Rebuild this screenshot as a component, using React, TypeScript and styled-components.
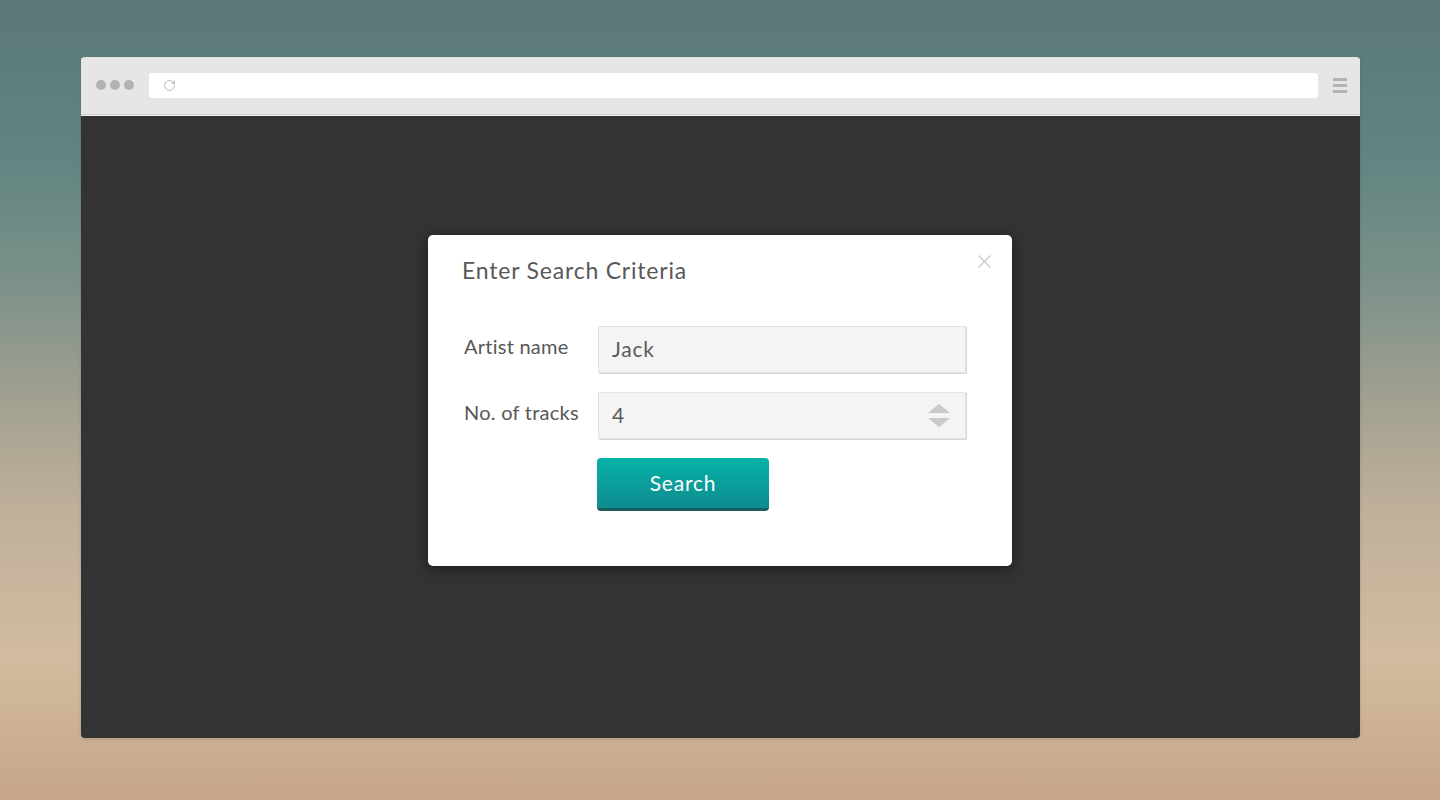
import React from "react";
import styled, { createGlobalStyle } from "styled-components";
import { RotateCw } from "lucide-react";

const GlobalStyle = createGlobalStyle`
  html, body { margin: 0; padding: 0; }
  body {
    font-family: Lato, "Open Sans", sans-serif;
    background: linear-gradient(to bottom, #5a7877 0%, #628581 20%, #7b918a 35%, #a2a090 50%, #bfb09a 64%, #d2bba0 82%, #c6a68a 100%);
    min-height: 800px;
  }
`;

const Page = styled.div`
  width: 1440px;
  height: 800px;
  box-sizing: border-box;
  padding: 57px 80px 62px 81px;
  display: flex;
`;

const Window = styled.div`
  flex: 1;
  display: flex;
  flex-direction: column;
  border-radius: 4px;
  overflow: hidden;
  box-shadow: 0 1px 3px rgba(0, 0, 0, 0.15);
`;

const Toolbar = styled.div`
  height: 56px;
  background: #e6e6e6;
  border-bottom: 1px solid #cfcfcf;
  box-shadow: 0 1px 0 #eeeeee;
  display: flex;
  align-items: center;
  padding: 0 13px 1px 15px;
  gap: 15px;
  position: relative;
  z-index: 1;
`;

const Dots = styled.div`
  display: flex;
  gap: 4px;
`;

const Dot = styled.span`
  width: 10px;
  height: 10px;
  border-radius: 50%;
  background: #b3b3b3;
`;

const UrlBar = styled.div`
  flex: 1;
  height: 25px;
  background: #ffffff;
  border-radius: 3px;
  display: flex;
  align-items: center;
  padding-left: 14px;
  color: #aaaaaa;
`;

const Burger = styled.div`
  width: 14px;
  display: flex;
  flex-direction: column;
  gap: 3px;
`;

const BurgerBar = styled.span`
  height: 3px;
  background: #b3b3b3;
`;

const Content = styled.div`
  flex: 1;
  margin-top: 1px;
  background: #333333;
  display: flex;
  justify-content: flex-start;
  align-items: flex-start;
  padding: 119px 0 0 347px;
`;

const Modal = styled.div`
  position: relative;
  width: 584px;
  height: 331px;
  box-sizing: border-box;
  background: #ffffff;
  border-radius: 5px;
  box-shadow: 0 3px 14px rgba(0, 0, 0, 0.45);
  padding: 19px 46px 0 34px;
`;

const Title = styled.h2`
  margin: 0;
  font-size: 23px;
  line-height: 32px;
  font-weight: 400;
  color: #595959;
  letter-spacing: 0.8px;
`;

const Close = styled.button`
  position: absolute;
  top: 19px;
  right: 20px;
  width: 15px;
  height: 15px;
  padding: 0;
  border: none;
  background: none;
  cursor: pointer;
`;

const Form = styled.div`
  margin-top: 40px;
  display: grid;
  grid-template-columns: 136px 368px;
  row-gap: 19px;
  align-items: center;
`;

const Label = styled.label`
  padding-left: 2px;
  font-size: 20px;
  letter-spacing: 0.25px;
  color: #575757;
  margin-top: -8px;
`;

const Field = styled.div`
  height: 47px;
  box-sizing: border-box;
  background: #f4f4f4;
  border: 1px solid #e3e3e3;
  box-shadow: 1px 1px 0 #d6d6d6;
  display: flex;
  align-items: center;
  padding: 0 15px 0 13px;
  font-size: 21px;
  letter-spacing: 0.8px;
  color: #5a5a5a;
`;

const FieldText = styled.span`
  flex: 1;
  margin-top: -3px;
`;

const Spinner = styled.div`
  display: flex;
  flex-direction: column;
  gap: 5px;
`;

const Arrow = styled.span<{ $up?: boolean }>`
  width: 0;
  height: 0;
  border-left: 11px solid transparent;
  border-right: 11px solid transparent;
  ${(p) =>
    p.$up
      ? "border-bottom: 9px solid #c9c9c9;"
      : "border-top: 9px solid #c9c9c9;"}
`;

const ButtonCell = styled.div`
  grid-column: 2;
  margin-left: -1px;
`;

const SearchButton = styled.button`
  width: 172px;
  height: 53px;
  border: none;
  border-bottom: 3px solid #1b5c5d;
  border-radius: 4px;
  background: linear-gradient(to bottom, #06b2a7 0%, #0f8c90 100%);
  color: #ffffff;
  font-family: Lato, "Open Sans", sans-serif;
  font-size: 21px;
  letter-spacing: 0.8px;
  padding: 0 0 1px;
  cursor: pointer;
`;

export default function App() {
  return (
    <>
      <GlobalStyle />
      <Page>
        <Window>
          <Toolbar>
            <Dots>
              <Dot />
              <Dot />
              <Dot />
            </Dots>
            <UrlBar>
              <RotateCw size={13} strokeWidth={1.6} />
            </UrlBar>
            <Burger>
              <BurgerBar />
              <BurgerBar />
              <BurgerBar />
            </Burger>
          </Toolbar>
          <Content>
            <Modal>
              <Title>Enter Search Criteria</Title>
              <Close aria-label="Close">
                <svg width="15" height="15" viewBox="0 0 15 15">
                  <path d="M1.5 1.5 L13.5 13.5 M13.5 1.5 L1.5 13.5" stroke="#c9c9c9" strokeWidth="1.4" fill="none" />
                </svg>
              </Close>
              <Form>
                <Label>Artist name</Label>
                <Field>
                  <FieldText>Jack</FieldText>
                </Field>
                <Label>No. of tracks</Label>
                <Field>
                  <FieldText>4</FieldText>
                  <Spinner>
                    <Arrow $up />
                    <Arrow />
                  </Spinner>
                </Field>
                <ButtonCell>
                  <SearchButton>Search</SearchButton>
                </ButtonCell>
              </Form>
            </Modal>
          </Content>
        </Window>
      </Page>
    </>
  );
}
